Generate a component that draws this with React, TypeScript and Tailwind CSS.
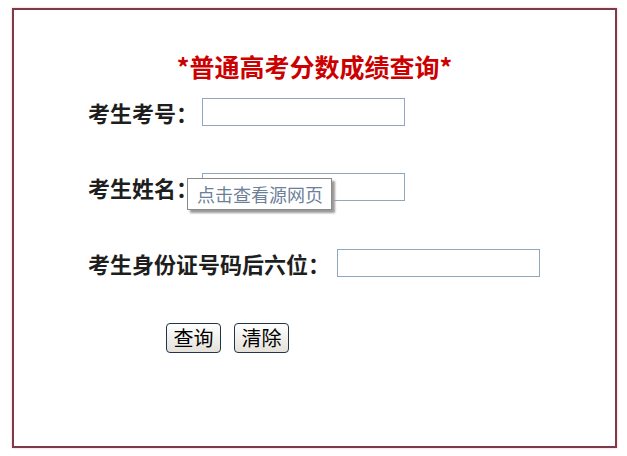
import { useState } from 'react';

const cjk = { fontFamily: '"Noto Sans CJK SC", "Noto Sans", sans-serif' };

function Field({ label, gap }: { label: string; gap: string }) {
    const [value, setValue] = useState('');
    return (
        <div className="flex items-center h-[28px]">
            <span className="text-[22px] font-bold leading-none text-[#1e1e1e]" style={cjk}>{label}</span>
            <input
                value={value}
                onChange={(e) => setValue(e.target.value)}
                className={`${gap} w-[203px] h-[28px] border border-[#8fa8bf] bg-white outline-none px-1 text-sm`}
            />
        </div>
    );
}

export default function App() {
    return (
        <div className="w-[627px] h-[456px] bg-white pt-[8px] pl-[12px]" style={cjk}>
            <div className="relative w-[605px] h-[440px] border-2 border-[#7e3a48] shadow-[0_0_2px_#f2b4b4] flex flex-col">
                <h1 className="mt-[41px] text-center text-[25px] leading-[30px] font-bold text-[#cc0000]">
                    *普通高考分数成绩查询*
                </h1>

                <div className="pl-[74px] mt-[17px] flex flex-col">
                    <Field label="考生考号：" gap="ml-[4px]" />
                    <div className="mt-[47px]">
                        <Field label="考生姓名：" gap="ml-[4px]" />
                    </div>
                    <div className="mt-[48px]">
                        <Field label="考生身份证号码后六位：" gap="ml-[7px]" />
                    </div>
                </div>

                <div className="mt-[46px] ml-[152px] flex gap-[13px]">
                    <button className="w-[55px] h-[30px] rounded-[4px] border border-[#22344b] bg-gradient-to-b from-white to-[#e3e1d8] text-[20px] leading-none text-black">
                        查询
                    </button>
                    <button className="w-[55px] h-[30px] rounded-[4px] border border-[#22344b] bg-gradient-to-b from-white to-[#e3e1d8] text-[20px] leading-none text-black">
                        清除
                    </button>
                </div>

                <div className="absolute left-[173px] top-[168px] w-[145px] h-[32px] bg-white border border-[#8a8a8a] shadow-[3px_3px_2px_#9a9a9a] flex items-center pl-[9px] text-[18px] text-[#6d7f99]">
                    点击查看源网页
                </div>
            </div>
        </div>
    );
}
